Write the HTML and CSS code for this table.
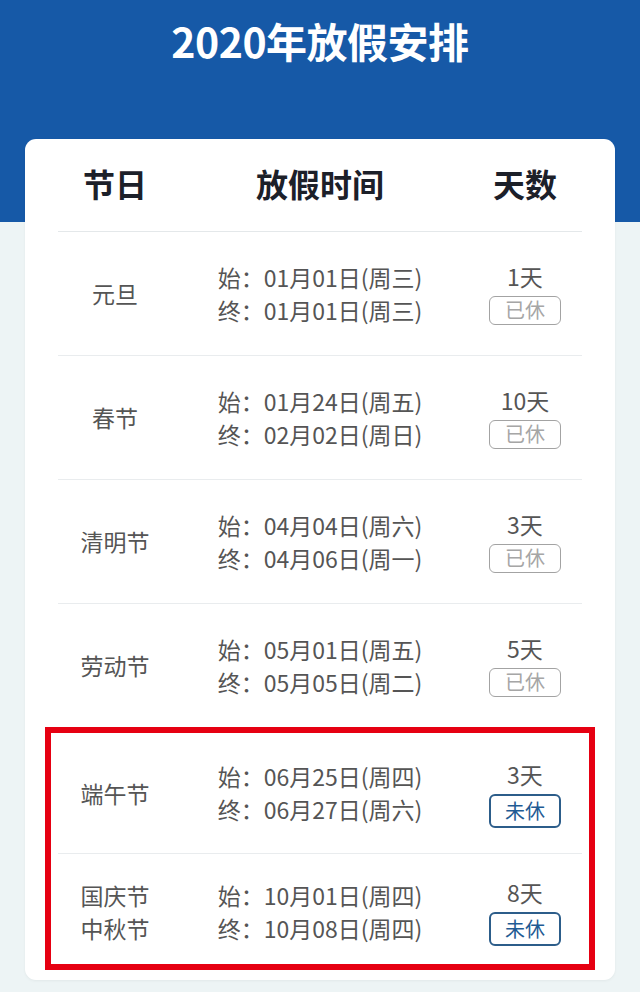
FILE: index.html
```html
<!DOCTYPE html>
<html lang="zh-CN">
<head>
<meta charset="utf-8">
<title>2020年放假安排</title>
<link rel="stylesheet" href="styles.css">
</head>
<body>
<div class="page">
  <h1 class="title">2020年放假安排</h1>
  <div class="card">
    <div class="row head">
      <div class="c-name">节日</div>
      <div class="c-date">放假时间</div>
      <div class="c-days">天数</div>
    </div>

    <div class="row">
      <div class="c-name">元旦</div>
      <div class="c-date"><div class="dates"><div>始：01月01日(周三)</div><div>终：01月01日(周三)</div></div></div>
      <div class="c-days"><div class="num">1天</div><div class="badge done">已休</div></div>
    </div>

    <div class="row">
      <div class="c-name">春节</div>
      <div class="c-date"><div class="dates"><div>始：01月24日(周五)</div><div>终：02月02日(周日)</div></div></div>
      <div class="c-days"><div class="num">10天</div><div class="badge done">已休</div></div>
    </div>

    <div class="row">
      <div class="c-name">清明节</div>
      <div class="c-date"><div class="dates"><div>始：04月04日(周六)</div><div>终：04月06日(周一)</div></div></div>
      <div class="c-days"><div class="num">3天</div><div class="badge done">已休</div></div>
    </div>

    <div class="row">
      <div class="c-name">劳动节</div>
      <div class="c-date"><div class="dates"><div>始：05月01日(周五)</div><div>终：05月05日(周二)</div></div></div>
      <div class="c-days"><div class="num">5天</div><div class="badge done">已休</div></div>
    </div>

    <div class="mark">
      <div class="row r5">
        <div class="c-name">端午节</div>
        <div class="c-date"><div class="dates"><div>始：06月25日(周四)</div><div>终：06月27日(周六)</div></div></div>
        <div class="c-days"><div class="num">3天</div><div class="badge todo">未休</div></div>
      </div>
      <div class="row r6">
        <div class="c-name"><div>国庆节</div><div>中秋节</div></div>
        <div class="c-date"><div class="dates"><div>始：10月01日(周四)</div><div>终：10月08日(周四)</div></div></div>
        <div class="c-days"><div class="num">8天</div><div class="badge todo">未休</div></div>
      </div>
    </div>
  </div>
</div>
</body>
</html>
```

FILE: styles.css
```css
html, body {
  margin: 0;
  padding: 0;
}
body {
  width: 640px;
  height: 992px;
  overflow: hidden;
  background: linear-gradient(to bottom, #1659a7 0, #1659a7 222px, #edf4f5 222px, #edf4f5 100%);
  font-family: "Noto Sans CJK SC", "Noto Sans", sans-serif;
}
.page {
  padding-top: 15px;
}
.title {
  margin: 0;
  text-align: center;
  color: #ffffff;
  font-size: 41px;
  line-height: 50px;
  font-weight: 700;
  letter-spacing: -0.5px;
}
.card {
  margin: 74px 25px 0 25px;
  background: #ffffff;
  border-radius: 11px;
  padding: 0 33px 10px 33px;
  box-shadow: 0 1px 3px rgba(0, 0, 0, 0.05);
}
.row {
  display: grid;
  grid-template-columns: 114px 1fr 114px;
  align-items: center;
  height: 123px;
  border-bottom: 1px solid #e9ecee;
  color: #555555;
  font-size: 23px;
}
.row.head {
  height: 92px;
  color: #1c2029;
  font-size: 32px;
  font-weight: 700;
  border-bottom: 1px solid #e4e8ea;
}
.row.head > div {
  padding-top: 2px;
  padding-bottom: 6px;
}
.c-name {
  text-align: center;
  line-height: 33px;
}
.c-date {
  display: flex;
  justify-content: center;
}
.dates {
  line-height: 33px;
  white-space: nowrap;
}
.c-days {
  display: flex;
  flex-direction: column;
  align-items: center;
  gap: 6px;
}
.num {
  line-height: 28px;
}
.badge {
  box-sizing: border-box;
  width: 72px;
  height: 29px;
  border-radius: 6px;
  font-size: 20px;
  line-height: 25px;
  text-align: center;
}
.badge.done {
  border: 1.5px solid #a3a3a3;
  color: #a6a6a6;
}
.badge.todo {
  border: 2px solid #2c5d8a;
  color: #1f5b94;
  height: 34px;
  line-height: 30px;
}
.mark {
  margin: -1px -13px 0 -13px;
  border: 6px solid #e60012;
  padding: 0 7px;
}
.r5 {
  height: 120px;
}
.r6 {
  height: 104px;
  border-bottom: none;
  padding-top: 6px;
}
.r5 .c-days {
  padding-top: 2px;
}
```
